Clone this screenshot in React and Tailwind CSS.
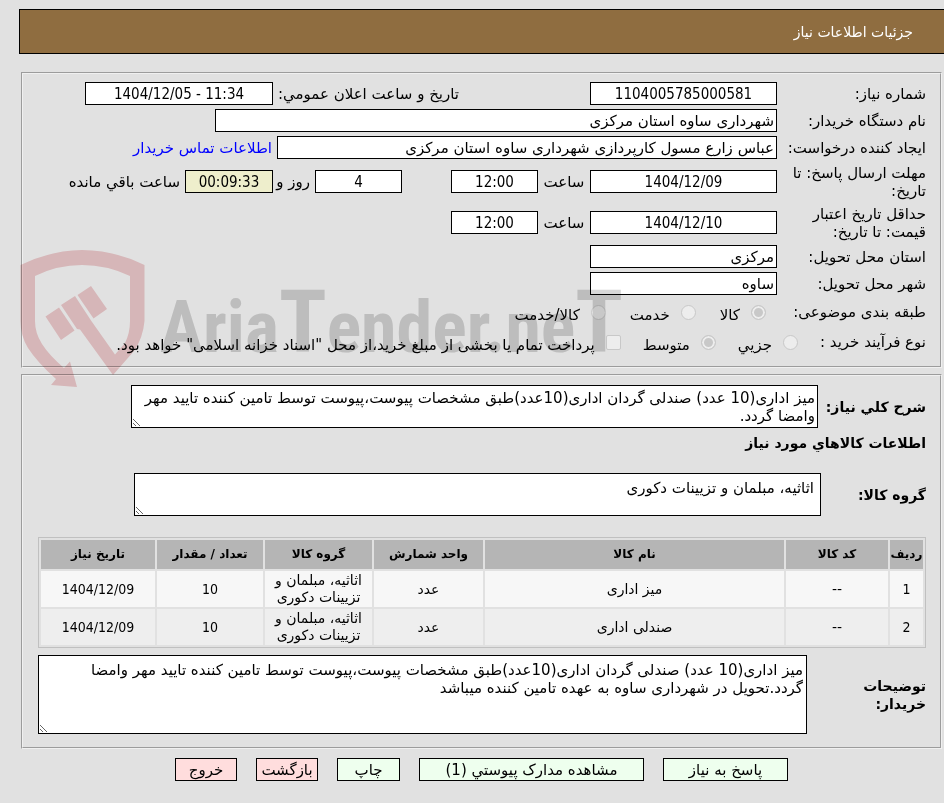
import clsx from 'clsx';

const items = [
  { row: 1, code: '--', name: 'میز اداری', unit: 'عدد', group: 'اثاثیه، مبلمان و تزیینات دکوری', qty: '10', date: '1404/12/09' },
  { row: 2, code: '--', name: 'صندلی اداری', unit: 'عدد', group: 'اثاثیه، مبلمان و تزیینات دکوری', qty: '10', date: '1404/12/09' },
];

const columns = [
  { key: 'row', label: 'ردیف', width: 'w-[33px]', numeric: true },
  { key: 'code', label: 'کد کالا', width: 'w-[102px]' },
  { key: 'name', label: 'نام کالا', width: '' },
  { key: 'unit', label: 'واحد شمارش', width: 'w-[109px]' },
  { key: 'group', label: 'گروه کالا', width: 'w-[107px]' },
  { key: 'qty', label: 'تعداد / مقدار', width: 'w-[106px]', numeric: true },
  { key: 'date', label: 'تاریخ نیاز', width: 'w-[114px]', numeric: true },
];

function Field({ numeric, className, ...props }) {
  return (
    <input
      type="text"
      readOnly
      className={clsx(
        'h-[23px] shrink-0 border border-black px-0.5',
        numeric && "text-center [font-family:'DejaVu_Sans_Condensed',sans-serif]",
        className
      )}
      {...props}
    />
  );
}

function Row({ label, htmlFor, tall, children }) {
  return (
    <div className={clsx('flex items-center', tall ? 'min-h-[41px]' : 'min-h-[27px]')}>
      <label htmlFor={htmlFor} className="w-[149px] shrink-0">{label}</label>
      {children}
    </div>
  );
}

function Choice({ type = 'radio', label, ...props }) {
  return (
    <label className="flex items-center gap-[11px] whitespace-nowrap">
      <input
        type={type}
        disabled
        className={clsx(
          'size-[15px] shrink-0 appearance-none border border-[#c8c8c8] bg-[#ededed]',
          type === 'radio'
            ? 'rounded-full checked:bg-[#c8c8c8] checked:shadow-[inset_0_0_0_2px_#ededed]'
            : 'rounded-xs'
        )}
        {...props}
      />
      <span className="pt-1.5">{label}</span>
    </label>
  );
}

function Panel({ className, children }) {
  return (
    <fieldset className={clsx('ml-[21px] mr-[2px] border-2 border-[#f0f0f0] pr-3.5 pl-[15px] [border-style:groove]', className)}>
      {children}
    </fieldset>
  );
}

function ActionButton({ danger, className, children }) {
  return (
    <button
      type="button"
      className={clsx('h-[23px] border border-black whitespace-nowrap', danger ? 'bg-[#ffdddd]' : 'bg-[#eeffee]', className)}
    >
      {children}
    </button>
  );
}

function Watermark() {
  return (
    <svg
      className="pointer-events-none absolute left-5 top-[248px] mix-blend-multiply"
      width="610"
      height="142"
      viewBox="20 248 610 142"
      aria-hidden="true"
    >
      <g fill="#f3cfd1">
        <path
          fillRule="evenodd"
          d="M20.500 265 Q52 250 82 250 Q114 250 144.500 265 V321 Q143 338 134 351 L113 375 L80 329.500 L77 329 L61 305 L75 296 L91 320.500 L115 354.500 L125 343 Q130 333 130 321 V276 Q107 265 82 265 Q57 265 35 276 V321 Q35 333 42 344 Q49 355 64 368 L70 361.500 L77 387 L51 385 L56 379 Q37 362 28 348 Q20.500 336 20.500 321 Z"
        />
        <path d="M45.500 316.500 L59 307.500 L74.500 330.500 L61 340 Z" />
        <path d="M77.500 295 L91 286 L107 309 L93.500 318.500 Z" />
      </g>
      <text
        x="160"
        y="352"
        fill="#d7d7d7"
        className="text-[72px] font-bold [direction:ltr] [font-family:'Roboto_Condensed','Open_Sans_Condensed',Roboto,sans-serif]"
      >
        Aria<tspan className="text-[88px]">T</tspan>ender.ne<tspan className="text-[88px]">T</tspan>
      </text>
    </svg>
  );
}

export default function App() {
  return (
    <div
      dir="rtl"
      className="relative min-h-screen bg-[#e1e1e1] pt-[9px] pb-[22px] text-[15px] leading-[18px] text-black [font-family:'DejaVu_Sans',sans-serif]"
    >
      <header className="ml-[19px] flex h-[45px] items-center border border-r-0 border-black bg-[#8f6d40] pr-[31px]">
        <h1 className="text-[14px] text-white">جزئیات اطلاعات نیاز</h1>
      </header>

      <Panel className="mt-[18px] pt-1.5 pb-[9px]">
        <Row label="شماره نیاز:" htmlFor="need-no">
          <Field numeric id="need-no" className="w-[187px] bg-white" value="1104005785000581" />
          <label htmlFor="announce" className="mr-[131px] w-[186px] shrink-0 whitespace-nowrap">تاریخ و ساعت اعلان عمومي:</label>
          <Field numeric id="announce" className="w-[188px] bg-white" dir="ltr" value="1404/12/05 - 11:34" />
        </Row>
        <Row label="نام دستگاه خریدار:" htmlFor="buyer">
          <Field id="buyer" className="w-[562px] bg-white" value="شهرداری ساوه استان مرکزی" />
        </Row>
        <Row label="ایجاد کننده درخواست:" htmlFor="creator">
          <Field id="creator" className="w-[500px] bg-white" value="عباس زارع مسول کارپردازی شهرداری ساوه استان مرکزی" />
          <a href="#contact" className="mr-[5px] whitespace-nowrap text-[#0000ff]">اطلاعات تماس خریدار</a>
        </Row>
        <Row tall label={<>مهلت ارسال پاسخ: تا<br />تاریخ:</>} htmlFor="deadline">
          <Field numeric id="deadline" className="w-[187px] bg-white" value="1404/12/09" />
          <label htmlFor="deadline-time" className="w-[52px] shrink-0 text-center">ساعت</label>
          <Field numeric id="deadline-time" className="w-[87px] bg-white" value="12:00" />
          <Field numeric id="days" className="mr-[49px] w-[87px] bg-white" value="4" />
          <label htmlFor="days" className="w-[42px] shrink-0 pr-[5px]">روز و</label>
          <Field numeric id="remaining" className="w-[88px] bg-[#eeeecc]" value="00:09:33" />
          <label htmlFor="remaining" className="mr-[5px] whitespace-nowrap">ساعت باقي مانده</label>
        </Row>
        <Row tall label={<>حداقل تاریخ اعتبار<br />قیمت: تا تاریخ:</>} htmlFor="valid-until">
          <Field numeric id="valid-until" className="w-[187px] bg-white" value="1404/12/10" />
          <label htmlFor="valid-time" className="w-[52px] shrink-0 text-center">ساعت</label>
          <Field numeric id="valid-time" className="w-[87px] bg-white" value="12:00" />
        </Row>
        <Row label="استان محل تحویل:" htmlFor="province">
          <Field id="province" className="w-[187px] bg-white" value="مرکزی" />
        </Row>
        <Row label="شهر محل تحویل:" htmlFor="city">
          <Field id="city" className="w-[187px] bg-white" value="ساوه" />
        </Row>
        <div className="flex min-h-[30px] items-center" role="radiogroup" aria-labelledby="kind-label">
          <span id="kind-label" className="w-[160px] shrink-0">طبقه بندی موضوعی:</span>
          <div className="flex gap-6">
            <Choice name="kind" label="کالا" defaultChecked />
            <Choice name="kind" label="خدمت" />
            <Choice name="kind" label="کالا/خدمت" />
          </div>
        </div>
        <div className="flex min-h-[30px] items-center" role="group" aria-labelledby="process-label">
          <span id="process-label" className="w-[128px] shrink-0">نوع فرآیند خرید :</span>
          <div className="flex gap-[22px]">
            <Choice name="process" label="جزیي" />
            <Choice name="process" label="متوسط" defaultChecked />
            <Choice type="checkbox" label={'پرداخت تمام یا بخشی از مبلغ خرید،از محل "اسناد خزانه اسلامی" خواهد بود.'} />
          </div>
        </div>
      </Panel>

      <Panel className="mt-[6px] pt-[9px] pb-[13px]">
        <div className="flex items-center">
          <label htmlFor="summary" className="w-[108px] shrink-0 text-[14px] font-bold">شرح کلي نیاز:</label>
          <textarea
            id="summary"
            readOnly
            className="block h-[43px] w-[687px] overflow-hidden border border-black bg-white px-0.5 py-[3px]"
            defaultValue="میز اداری(10 عدد) صندلی گردان اداری(10عدد)طبق مشخصات پیوست،پیوست توسط تامین کننده تایید مهر وامضا گردد."
          />
        </div>
        <h2 className="mt-1.5 text-[14px] font-bold">اطلاعات کالاهاي مورد نیاز</h2>
        <div className="mt-[21px] flex items-center">
          <label htmlFor="group" className="w-[105px] shrink-0 text-[14px] font-bold">گروه کالا:</label>
          <textarea
            id="group"
            readOnly
            className="block h-[43px] w-[687px] overflow-hidden border border-black bg-white px-1.5 py-[5px]"
            defaultValue="اثاثیه، مبلمان و تزیینات دکوری"
          />
        </div>

        <table className="mt-[21px] w-full table-fixed border-separate border-spacing-[2px] border border-[#c0c0c0] text-center text-[14px] leading-[17px]">
          <thead>
            <tr>
              {columns.map((col) => (
                <th key={col.key} scope="col" className={clsx('h-[29px] bg-[#b5b5b5] p-0 text-[12px] font-bold', col.width)}>
                  {col.label}
                </th>
              ))}
            </tr>
          </thead>
          <tbody>
            {items.map((item) => (
              <tr key={item.row} className="odd:bg-[#f7f7f7] even:bg-[#eeeeee]">
                {columns.map((col) => (
                  <td
                    key={col.key}
                    className={clsx('h-9 px-1.5 py-px', col.numeric && "[font-family:'DejaVu_Sans_Condensed',sans-serif]")}
                  >
                    {item[col.key]}
                  </td>
                ))}
              </tr>
            ))}
          </tbody>
        </table>

        <div className="mt-[7px] flex items-center">
          <label htmlFor="notes" className="w-[119px] shrink-0 text-[14px] font-bold">توضیحات<br />خریدار:</label>
          <textarea
            id="notes"
            readOnly
            className="block h-[79px] min-w-0 flex-1 overflow-hidden border border-black bg-white px-[3px] py-[5px]"
            defaultValue="میز اداری(10 عدد) صندلی گردان اداری(10عدد)طبق مشخصات پیوست،پیوست توسط تامین کننده تایید مهر وامضا گردد.تحویل در شهرداری ساوه به عهده تامین کننده میباشد"
          />
        </div>
      </Panel>

      <div className="mt-[9px] flex justify-center gap-[19px] pl-[19px]">
        <ActionButton className="w-[125px]">پاسخ به نیاز</ActionButton>
        <ActionButton className="w-[225px]">مشاهده مدارک پیوستي (1)</ActionButton>
        <ActionButton className="w-[63px]">چاپ</ActionButton>
        <ActionButton danger className="w-[62px]">بازگشت</ActionButton>
        <ActionButton danger className="w-[62px]">خروج</ActionButton>
      </div>

      <Watermark />
    </div>
  );
}
